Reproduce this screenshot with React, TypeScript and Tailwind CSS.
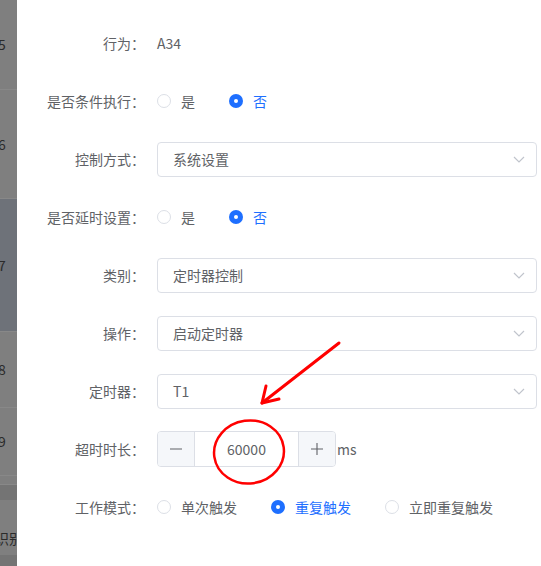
import React from 'react'

const font = { fontFamily: '"Noto Sans CJK SC", "Noto Sans", sans-serif' }

function Radio({ label, checked }: { label: string; checked?: boolean }) {
  return (
    <label className="flex items-center mr-[34px] cursor-pointer">
      {checked ? (
        <span className="w-[14px] h-[14px] rounded-full bg-[#1e6fff] flex items-center justify-center">
          <span className="w-[4px] h-[4px] rounded-full bg-white" />
        </span>
      ) : (
        <span className="w-[14px] h-[14px] rounded-full border border-[#dcdfe6] bg-white" />
      )}
      <span className={`ml-[10px] text-[14px] ${checked ? 'text-[#1e6fff]' : 'text-[#606266]'}`}>{label}</span>
    </label>
  )
}

function Select({ value }: { value: string }) {
  return (
    <div className="w-[380px] h-[35px] border border-[#dcdfe6] rounded-[4px] flex items-center justify-between pl-[15px] pr-[10px] bg-white">
      <span className="text-[14px] text-[#606266]">{value}</span>
      <svg width="14" height="14" viewBox="0 0 14 14" fill="none">
        <path d="M2 5 L7 10 L12 5" stroke="#c0c4cc" strokeWidth="1.2" />
      </svg>
    </div>
  )
}

function Row({ label, children }: { label: string; children: React.ReactNode }) {
  return (
    <div className="flex items-center h-[36px] mb-[22px]">
      <div className="w-[120px] pr-[12px] text-right text-[14px] text-[#606266] shrink-0">{label}</div>
      <div className="flex items-center">{children}</div>
    </div>
  )
}

const sideRows = [
  { h: 90, text: '5' },
  { h: 109, text: '6' },
  { h: 133, text: '7', active: true },
  { h: 76, text: '8' },
  { h: 68, text: '9' },
]

export default function App() {
  return (
    <div className="relative w-[541px] h-[566px] overflow-hidden flex bg-white" style={font}>
      {/* dimmed table behind the drawer */}
      <div className="w-[17px] shrink-0 bg-[#7f7f7f] flex flex-col overflow-hidden">
        {sideRows.map((r) => (
          <div
            key={r.text}
            className={`flex items-center border-b border-[#888888] text-[14px] text-[#2b2b2b] ${r.active ? 'bg-[#6e7279]' : ''}`}
            style={{ height: r.h }}
          >
            <span className="-ml-[2px]">{r.text}</span>
          </div>
        ))}
        <div className="h-[9px] border-b border-[#888888]" />
        <div className="h-[15px] bg-[#747474]" />
        <div className="h-[55px] pt-[22px] flex items-center text-[14px] text-[#2b2b2b] whitespace-nowrap">
          <span className="-ml-[5px]">识别</span>
        </div>
        <div className="flex-1 bg-[#747474]" />
      </div>

      {/* drawer body */}
      <div className="flex-1 pl-[20px] pt-[25px]">
        <Row label="行为：">
          <span className="text-[14px] text-[#606266]">A34</span>
        </Row>
        <Row label="是否条件执行：">
          <Radio label="是" />
          <Radio label="否" checked />
        </Row>
        <Row label="控制方式：">
          <Select value="系统设置" />
        </Row>
        <Row label="是否延时设置：">
          <Radio label="是" />
          <Radio label="否" checked />
        </Row>
        <Row label="类别：">
          <Select value="定时器控制" />
        </Row>
        <Row label="操作：">
          <Select value="启动定时器" />
        </Row>
        <Row label="定时器：">
          <Select value="T1" />
        </Row>
        <Row label="超时时长：">
          <div className="flex h-[36px] w-[179px] border border-[#dcdfe6] rounded-[4px] overflow-hidden">
            <button className="w-[37px] bg-[#f5f7fa] border-r border-[#dcdfe6] flex items-center justify-center text-[#606266]">
              <svg width="14" height="14" viewBox="0 0 14 14"><path d="M1 7 H13" stroke="#606266" strokeWidth="1.1" /></svg>
            </button>
            <div className="flex-1 flex items-center justify-center text-[14px] text-[#606266]">60000</div>
            <button className="w-[37px] bg-[#f5f7fa] border-l border-[#dcdfe6] flex items-center justify-center">
              <svg width="14" height="14" viewBox="0 0 14 14"><path d="M1 7 H13 M7 1 V13" stroke="#606266" strokeWidth="1.1" /></svg>
            </button>
          </div>
          <span className="ml-[1px] text-[14px] text-[#606266]">ms</span>
        </Row>
        <Row label="工作模式：">
          <Radio label="单次触发" />
          <Radio label="重复触发" checked />
          <Radio label="立即重复触发" />
        </Row>
      </div>

      {/* red annotation */}
      <svg className="absolute inset-0 pointer-events-none" width="541" height="566" viewBox="0 0 541 566" fill="none">
        <path d="M339 343 L262 403" stroke="#ff0000" strokeWidth="3" strokeLinecap="round" />
        <path d="M266 386 L262 403 L279 399" stroke="#ff0000" strokeWidth="3" strokeLinecap="round" strokeLinejoin="round" />
        <ellipse cx="249" cy="452" rx="35" ry="31.5" transform="rotate(-8 249 452)" stroke="#ff0000" strokeWidth="2.5" />
      </svg>
    </div>
  )
}
